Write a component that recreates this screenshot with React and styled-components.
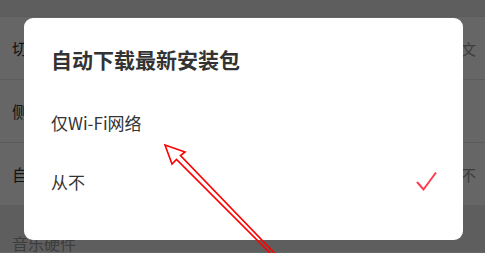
import styled, { createGlobalStyle } from 'styled-components';

const GlobalStyle = createGlobalStyle`
  html, body {
    margin: 0;
    padding: 0;
    background: #fff;
  }
  body {
    width: 485px;
    height: 253px;
    overflow: hidden;
    font-family: "Noto Sans CJK SC", "Noto Sans", sans-serif;
  }
`;

const Screen = styled.div`
  position: relative;
  width: 485px;
  height: 253px;
  overflow: hidden;
`;

const Settings = styled.div`
  display: flex;
  flex-direction: column;
`;

const TopStrip = styled.div`
  height: 16px;
  background: #ebebeb;
`;

const Row = styled.div`
  height: 63px;
  display: flex;
  align-items: center;
  justify-content: space-between;
  padding: 0 9px 0 12px;
  background: #fff;
  border-top: 1px solid #e4e4e4;
  box-sizing: border-box;
`;

const RowLabel = styled.span`
  font-size: 16px;
  color: #333;
`;

const RowValue = styled.span`
  font-size: 15px;
  color: #999;
`;

const Section = styled.div`
  height: 47px;
  background: #ebebeb;
  padding: 26px 12px 0;
  box-sizing: border-box;
`;

const SectionLabel = styled.span`
  font-size: 16px;
  color: #999;
`;

const Overlay = styled.div`
  position: absolute;
  inset: 0;
  background: rgba(0, 0, 0, 0.6);
`;

const Dialog = styled.div`
  position: absolute;
  left: 24px;
  top: 18px;
  width: 439px;
  height: 222px;
  box-sizing: border-box;
  background: #fff;
  border-radius: 9px;
  padding: 28px 26px 0 27px;
  display: flex;
  flex-direction: column;
`;

const DialogTitle = styled.h2`
  margin: 0 0 21px;
  font-size: 21px;
  line-height: 26px;
  font-weight: 700;
  color: #333;
`;

const Option = styled.div`
  height: 59px;
  display: flex;
  align-items: center;
  justify-content: space-between;
  font-size: 17px;
  color: #333;
`;

const Check = () => (
  <svg width="22" height="22" viewBox="0 0 22 22">
    <polyline
      points="2,11 8.5,18.5 21,1.5"
      fill="none"
      stroke="#ff3b4f"
      strokeWidth="2"
      strokeLinejoin="miter"
    />
  </svg>
);

const Annotation = styled.svg`
  position: absolute;
  left: 0;
  top: 0;
  pointer-events: none;
`;

const options = [
  { label: '仅Wi-Fi网络', selected: false },
  { label: '从不', selected: true },
];

export default function App() {
  return (
    <Screen>
      <GlobalStyle />
      <Settings>
        <TopStrip />
        <Row>
          <RowLabel>切换语言</RowLabel>
          <RowValue>简体中文</RowValue>
        </Row>
        <Row>
          <RowLabel>侧边栏设置</RowLabel>
        </Row>
        <Row>
          <RowLabel>自动下载最新安装包</RowLabel>
          <RowValue>从不</RowValue>
        </Row>
        <Section>
          <SectionLabel>音乐硬件</SectionLabel>
        </Section>
      </Settings>
      <Overlay />
      <Dialog>
        <DialogTitle>自动下载最新安装包</DialogTitle>
        {options.map((o) => (
          <Option key={o.label}>
            <span>{o.label}</span>
            {o.selected && <Check />}
          </Option>
        ))}
      </Dialog>
      <Annotation width="485" height="253" viewBox="0 0 485 253">
        <polygon
          points="165,145 185,152 180.5,155.5 284,263 282,265 176.5,159.5 172,164"
          fill="none"
          stroke="#ff0000"
          strokeWidth="1.6"
          strokeLinejoin="miter"
        />
      </Annotation>
    </Screen>
  );
}
